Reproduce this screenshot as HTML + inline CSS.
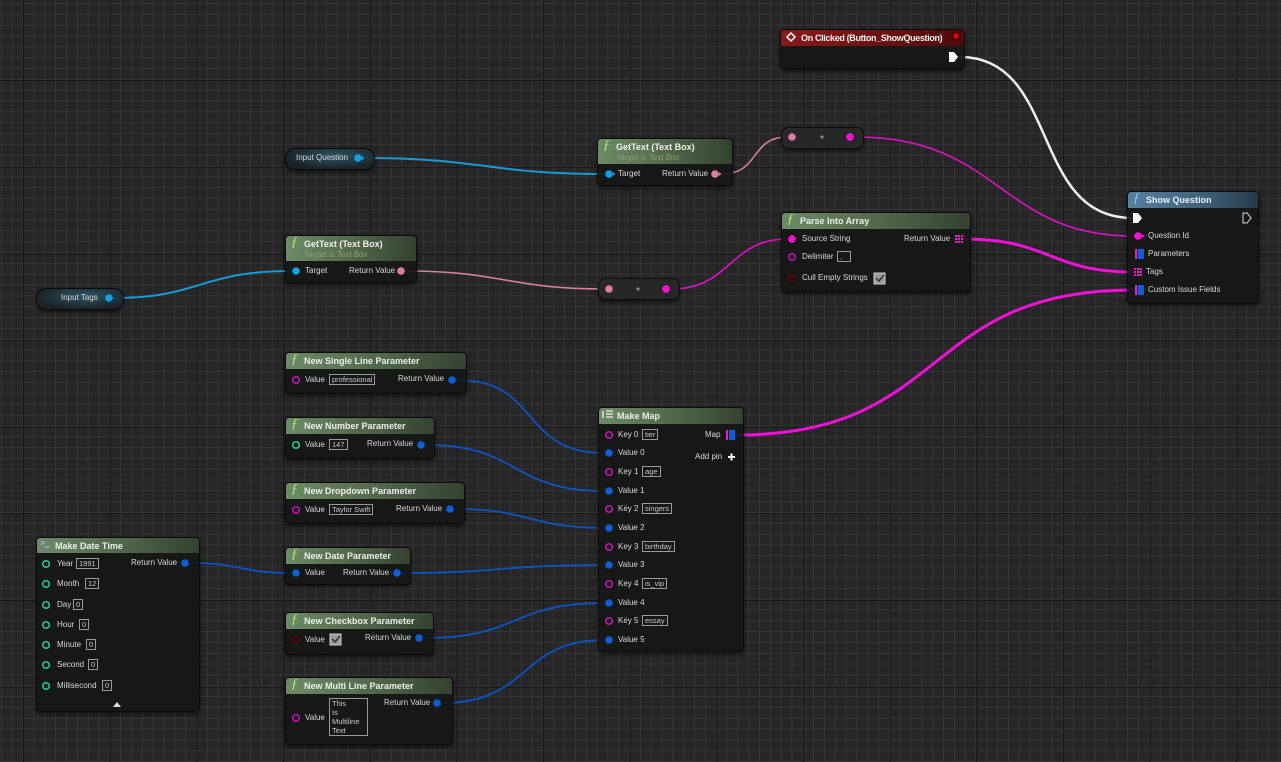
<!DOCTYPE html>
<html><head><meta charset="utf-8">
<style>
html,body{margin:0;padding:0;}
body{width:1281px;height:762px;overflow:hidden;position:relative;background-color:#262626;
background-image:
linear-gradient(90deg,#151515 1.2px,transparent 1.2px),
linear-gradient(0deg,#151515 1.2px,transparent 1.2px),
linear-gradient(90deg,#363636 1px,transparent 1px),
linear-gradient(0deg,#363636 1px,transparent 1px);
background-size:86.67px 86.67px,86.67px 86.67px,10.833px 10.833px,10.833px 10.833px;
background-position:23px 0,0 81px,1px 0,0 4px;
font-family:"Liberation Sans",sans-serif;}
.n{position:absolute;background:rgba(22,24,22,0.93);border:1px solid #0c0c0c;border-radius:4px;box-shadow:0 2px 4px rgba(0,0,0,.6);}
.h{position:absolute;left:0;right:0;top:0;border-radius:3px 3px 0 0;background:linear-gradient(90deg,#6d8b66,#4f6649 55%,#33422f);}
.h b{position:absolute;left:18px;top:3px;font-size:9px;color:#eee;white-space:nowrap;}
.h i.f{position:absolute;left:5px;top:-1px;font:italic 14px "Liberation Serif",serif;color:#a8f07e;}
.sub{position:absolute;left:18px;top:14px;font:italic 8px "Liberation Sans",sans-serif;color:#8aa070;}
.pill{position:absolute;border-radius:10px;background:radial-gradient(ellipse at 55% 35%,#2e5466,#1a2428 70%);border:1px solid #0a0a0a;box-shadow:0 2px 4px rgba(0,0,0,.6);}
.l{position:absolute;font-size:8px;line-height:10px;color:#d8d8d8;white-space:nowrap;}
.bx{position:absolute;border:1px solid #9a9a9a;font-size:7.5px;line-height:9px;color:#c8c8c8;padding:0 2px;white-space:nowrap;}
svg{position:absolute;left:0;top:0;}
</style></head><body>

<svg width="1281" height="762" fill="none" stroke-linecap="round">
<path d="M960 57 C1060 57,1030 218,1132 218" stroke="#eee" stroke-width="2.5"/>
<path d="M365 158 C480 158,490 174,604 174" stroke="#1799d8" stroke-width="2"/>
<path d="M722 174 C760 174,750 137,787 137" stroke="#d67fa0" stroke-width="1.6"/>
<path d="M856 137 C1000 137,1000 236,1133 236" stroke="#e010c8" stroke-width="1.6"/>
<path d="M115 298 C200 298,200 271,291 271" stroke="#1799d8" stroke-width="2"/>
<path d="M408 271 C500 271,510 289,604 289" stroke="#d67fa0" stroke-width="1.6"/>
<path d="M672 289 C730 289,730 239,787 239" stroke="#e010c8" stroke-width="1.6"/>
<path d="M964 239 C1050 239,1050 272,1133 272" stroke="#f010d8" stroke-width="3"/>
<path d="M737 435 C950 435,920 290,1133 290" stroke="#f010d8" stroke-width="3"/>
<g stroke="#0a55c8" stroke-width="1.8">
<path d="M458 380 C540 380,520 453,604 453"/>
<path d="M427 445 C520 445,510 491,604 491"/>
<path d="M456 509 C530 509,530 528,604 528"/>
<path d="M403 573 C500 573,500 565,604 565"/>
<path d="M425 638 C520 638,510 603,604 603"/>
<path d="M443 703 C530 703,520 640,604 640"/>
<path d="M191 563 C240 563,240 573,291 573"/>
</g>
</svg>

<div class="n" style="left:780px;top:29px;width:183px;height:38px;">
<div class="h" style="height:16px;background:linear-gradient(90deg,#8a1a1a,#6a1010 60%,#4a0c0c);"><b style="left:20px;letter-spacing:-0.35px">On Clicked (Button_ShowQuestion)</b></div></div>
<div class="n" style="left:1127px;top:191px;width:130px;height:111px;">
<div class="h" style="height:16px;background:linear-gradient(90deg,#5580a0,#3d6078 60%,#263a48);"><i class="f" style="color:#8cc8f0">ƒ</i><b>Show Question</b></div></div>
<div class="pill" style="left:285px;top:148px;width:88px;height:20px;"></div>
<div class="n" style="left:597px;top:138px;width:134px;height:46px;">
<div class="h" style="height:25px;"><i class="f">ƒ</i><b>GetText (Text Box)</b><div class="sub">Target is Text Box</div></div></div>
<div class="n" style="left:781px;top:127px;width:81px;height:20px;border-radius:8px;background:#262727;"></div>
<div class="n" style="left:781px;top:212px;width:188px;height:78px;">
<div class="h" style="height:16px;"><i class="f">ƒ</i><b>Parse Into Array</b></div></div>
<div class="n" style="left:285px;top:235px;width:130px;height:46px;">
<div class="h" style="height:25px;"><i class="f">ƒ</i><b>GetText (Text Box)</b><div class="sub">Target is Text Box</div></div></div>
<div class="pill" style="left:36px;top:288px;width:86px;height:20px;"></div>
<div class="n" style="left:598px;top:278px;width:80px;height:20px;border-radius:8px;background:#262727;"></div>
<div class="n" style="left:285px;top:352px;width:180px;height:40px;"><div class="h" style="height:16px;"><i class="f">ƒ</i><b>New Single Line Parameter</b></div></div>
<div class="n" style="left:285px;top:417px;width:148px;height:40px;"><div class="h" style="height:16px;"><i class="f">ƒ</i><b>New Number Parameter</b></div></div>
<div class="n" style="left:285px;top:482px;width:178px;height:40px;"><div class="h" style="height:16px;"><i class="f">ƒ</i><b>New Dropdown Parameter</b></div></div>
<div class="n" style="left:285px;top:547px;width:124px;height:36px;"><div class="h" style="height:16px;"><i class="f">ƒ</i><b>New Date Parameter</b></div></div>
<div class="n" style="left:285px;top:612px;width:147px;height:41px;"><div class="h" style="height:16px;"><i class="f">ƒ</i><b>New Checkbox Parameter</b></div></div>
<div class="n" style="left:285px;top:677px;width:166px;height:66px;"><div class="h" style="height:16px;"><i class="f">ƒ</i><b>New Multi Line Parameter</b></div></div>
<div class="n" style="left:36px;top:537px;width:162px;height:173px;"><div class="h" style="height:15px;"><b>Make Date Time</b></div></div>
<div class="n" style="left:598px;top:407px;width:144px;height:243px;"><div class="h" style="height:16px;"><b>Make Map</b></div></div>

<svg width="1281" height="762">
<path d="M949 52 h5 l4 5 l-4 5 h-5z" fill="#fff"/>
<path d="M1133 213 h5 l4 5 l-4 5 h-5z" fill="#fff"/>
<path d="M1243 213 h4 l4 5 l-4 5 h-4z" fill="none" stroke="#ddd" stroke-width="1"/>
<rect x="953" y="33" width="6" height="6" fill="#e00" stroke="#300" stroke-width="1"/>
<path d="M787 37 l4 -4 l4 4 l-4 4z" fill="none" stroke="#fff" stroke-width="1.5"/>
<g>
<circle cx="358" cy="158" r="3.8" fill="#10a0f0"/><path d="M362 156 l2.5 2 l-2.5 2z" fill="#10a0f0"/>
<circle cx="609" cy="174" r="3.8" fill="#10a0f0"/><path d="M613 172 l2.5 2 l-2.5 2z" fill="#10a0f0"/>
<circle cx="715" cy="174" r="3.8" fill="#e07aa5"/><path d="M719 172 l2.5 2 l-2.5 2z" fill="#e07aa5"/>
<circle cx="792" cy="137" r="3.8" fill="#e07aa5"/><circle cx="822" cy="137" r="1.6" fill="#888"/><circle cx="850" cy="137" r="3.8" fill="#ff10d8"/>
<circle cx="1138" cy="236" r="3.8" fill="#ff10d8"/><path d="M1142 234 l2.5 2 l-2.5 2z" fill="#ff10d8"/>
<circle cx="792" cy="239" r="3.8" fill="#ff10d8"/>
<circle cx="792" cy="257" r="3.3" fill="none" stroke="#d010c0" stroke-width="1.5"/>
<circle cx="792" cy="278" r="3.3" fill="none" stroke="#6a0000" stroke-width="1.5"/>
<circle cx="296" cy="271" r="3.8" fill="#10a0f0"/>
<circle cx="401" cy="271" r="3.8" fill="#e07aa5"/>
<circle cx="109" cy="298" r="3.8" fill="#10a0f0"/>
<circle cx="609" cy="289" r="3.8" fill="#e07aa5"/><circle cx="638" cy="289" r="1.6" fill="#888"/><circle cx="666" cy="289" r="3.8" fill="#ff10d8"/>
<circle cx="452" cy="380" r="3.8" fill="#0a5fd8"/><circle cx="421" cy="445" r="3.8" fill="#0a5fd8"/>
<circle cx="450" cy="509" r="3.8" fill="#0a5fd8"/><circle cx="397" cy="573" r="3.8" fill="#0a5fd8"/>
<circle cx="419" cy="638" r="3.8" fill="#0a5fd8"/><circle cx="437" cy="703" r="3.8" fill="#0a5fd8"/>
<circle cx="296" cy="573" r="3.8" fill="#0a5fd8"/><circle cx="185" cy="563" r="3.8" fill="#0a5fd8"/>
<circle cx="296" cy="380" r="3.3" fill="none" stroke="#d010c0" stroke-width="1.5"/>
<circle cx="296" cy="445" r="3.3" fill="none" stroke="#1fd0a0" stroke-width="1.5"/>
<circle cx="296" cy="510" r="3.3" fill="none" stroke="#d010c0" stroke-width="1.5"/>
<circle cx="296" cy="640" r="3.3" fill="none" stroke="#6a0000" stroke-width="1.5"/>
<circle cx="296" cy="718" r="3.3" fill="none" stroke="#d010c0" stroke-width="1.5"/>
<g fill="none" stroke="#1fd0a0" stroke-width="1.5">
<circle cx="46" cy="564" r="3.3"/><circle cx="46" cy="584" r="3.3"/><circle cx="46" cy="605" r="3.3"/><circle cx="46" cy="625" r="3.3"/><circle cx="46" cy="645" r="3.3"/><circle cx="46" cy="665" r="3.3"/><circle cx="46" cy="686" r="3.3"/>
</g>
<path d="M113 707 l4 -5 l4 5z" fill="#ddd"/>
<g fill="none" stroke="#d010c0" stroke-width="1.5">
<circle cx="609" cy="435" r="3.3"/><circle cx="609" cy="472" r="3.3"/><circle cx="609" cy="509" r="3.3"/><circle cx="609" cy="547" r="3.3"/><circle cx="609" cy="584" r="3.3"/><circle cx="609" cy="621" r="3.3"/>
</g>
<g fill="#0a5fd8">
<circle cx="609" cy="453" r="3.8"/><circle cx="609" cy="491" r="3.8"/><circle cx="609" cy="528" r="3.8"/><circle cx="609" cy="565" r="3.8"/><circle cx="609" cy="603" r="3.8"/><circle cx="609" cy="640" r="3.8"/>
</g>
<g fill="#ff10d8">
<rect x="955" y="235" width="2" height="2"/><rect x="958" y="235" width="2" height="2"/><rect x="961" y="235" width="2" height="2"/>
<rect x="955" y="238" width="2" height="2"/><rect x="958" y="238" width="2" height="2"/><rect x="961" y="238" width="2" height="2"/>
<rect x="955" y="241" width="2" height="2"/><rect x="958" y="241" width="2" height="2"/><rect x="961" y="241" width="2" height="2"/>
<rect x="1134" y="268" width="2" height="2"/><rect x="1137" y="268" width="2" height="2"/><rect x="1140" y="268" width="2" height="2"/>
<rect x="1134" y="271" width="2" height="2"/><rect x="1137" y="271" width="2" height="2"/><rect x="1140" y="271" width="2" height="2"/>
<rect x="1134" y="274" width="2" height="2"/><rect x="1137" y="274" width="2" height="2"/><rect x="1140" y="274" width="2" height="2"/>
</g>
<g><rect x="1135" y="249" width="2" height="10" fill="#ff10d8"/><rect x="1138" y="249" width="6" height="10" fill="#0a5fd8"/>
<rect x="1135" y="285" width="2" height="10" fill="#ff10d8"/><rect x="1138" y="285" width="6" height="10" fill="#0a5fd8"/>
<rect x="726" y="430" width="2" height="10" fill="#ff10d8"/><rect x="729" y="430" width="6" height="10" fill="#0a5fd8"/></g>
<path d="M728 457 h7 M731.5 453.5 v7" stroke="#fff" stroke-width="2"/>
<rect x="874" y="273" width="11" height="11" fill="#9a9a9a" stroke="#ccc"/><path d="M876 278 l3 3 l5 -6" stroke="#333" stroke-width="1.5" fill="none"/>
<rect x="330" y="634" width="11" height="11" fill="#9a9a9a" stroke="#ccc"/><path d="M332 639 l3 3 l5 -6" stroke="#333" stroke-width="1.5" fill="none"/>
<path d="M603 411 v7 M606 411 h7 M606 414 h7 M606 417 h7" stroke="#ddd" stroke-width="1.5"/>
<path d="M41 541 l3 2 l-3 2 M44 547 h6" stroke="#aad" stroke-width="1.2" fill="none"/>
</svg>

<span class="l" style="left:296px;top:153px">Input Question</span>
<span class="l" style="left:61px;top:293px">Input Tags</span>
<span class="l" style="left:618px;top:169px">Target</span><span class="l" style="left:662px;top:169px">Return Value</span>
<span class="l" style="left:305px;top:266px">Target</span><span class="l" style="left:349px;top:266px">Return Value</span>
<span class="l" style="left:802px;top:234px">Source String</span><span class="l" style="left:904px;top:234px">Return Value</span>
<span class="l" style="left:802px;top:252px">Delimiter</span><span class="bx" style="left:837px;top:251px;width:8px">,</span>
<span class="l" style="left:802px;top:273px">Cull Empty Strings</span>
<span class="l" style="left:1148px;top:231px">Question Id</span>
<span class="l" style="left:1148px;top:249px">Parameters</span>
<span class="l" style="left:1146px;top:267px">Tags</span>
<span class="l" style="left:1148px;top:285px">Custom Issue Fields</span>

<span class="l" style="left:305px;top:375px">Value</span><span class="bx" style="left:329px;top:374px">professional</span><span class="l" style="left:398px;top:374px">Return Value</span>
<span class="l" style="left:305px;top:440px">Value</span><span class="bx" style="left:329px;top:439px">147</span><span class="l" style="left:367px;top:439px">Return Value</span>
<span class="l" style="left:305px;top:505px">Value</span><span class="bx" style="left:329px;top:504px">Taylor Swift</span><span class="l" style="left:396px;top:504px">Return Value</span>
<span class="l" style="left:305px;top:568px">Value</span><span class="l" style="left:343px;top:568px">Return Value</span>
<span class="l" style="left:305px;top:635px">Value</span><span class="l" style="left:365px;top:633px">Return Value</span>
<span class="l" style="left:305px;top:713px">Value</span><span class="l" style="left:384px;top:698px">Return Value</span>
<span class="bx" style="left:329px;top:698px;width:33px;white-space:normal;line-height:9px">This<br>Is<br>Multiline<br>Text</span>

<span class="l" style="left:57px;top:559px">Year</span><span class="bx" style="left:76px;top:558px">1991</span><span class="l" style="left:131px;top:558px">Return Value</span>
<span class="l" style="left:57px;top:579px">Month</span><span class="bx" style="left:85px;top:578px">12</span>
<span class="l" style="left:57px;top:600px">Day</span><span class="bx" style="left:73px;top:599px">0</span>
<span class="l" style="left:57px;top:620px">Hour</span><span class="bx" style="left:79px;top:619px">0</span>
<span class="l" style="left:57px;top:640px">Minute</span><span class="bx" style="left:86px;top:639px">0</span>
<span class="l" style="left:57px;top:660px">Second</span><span class="bx" style="left:88px;top:659px">0</span>
<span class="l" style="left:57px;top:681px">Millisecond</span><span class="bx" style="left:102px;top:680px">0</span>

<span class="l" style="left:618px;top:430px">Key 0</span><span class="bx" style="left:642px;top:429px">tier</span><span class="l" style="left:705px;top:430px">Map</span>
<span class="l" style="left:695px;top:452px">Add pin</span>
<span class="l" style="left:618px;top:448px">Value 0</span>
<span class="l" style="left:618px;top:467px">Key 1</span><span class="bx" style="left:642px;top:466px">age</span>
<span class="l" style="left:618px;top:486px">Value 1</span>
<span class="l" style="left:618px;top:504px">Key 2</span><span class="bx" style="left:642px;top:503px">singers</span>
<span class="l" style="left:618px;top:523px">Value 2</span>
<span class="l" style="left:618px;top:542px">Key 3</span><span class="bx" style="left:642px;top:541px">birthday</span>
<span class="l" style="left:618px;top:560px">Value 3</span>
<span class="l" style="left:618px;top:579px">Key 4</span><span class="bx" style="left:642px;top:578px">is_vip</span>
<span class="l" style="left:618px;top:598px">Value 4</span>
<span class="l" style="left:618px;top:616px">Key 5</span><span class="bx" style="left:642px;top:615px">essay</span>
<span class="l" style="left:618px;top:635px">Value 5</span>
</body></html>
